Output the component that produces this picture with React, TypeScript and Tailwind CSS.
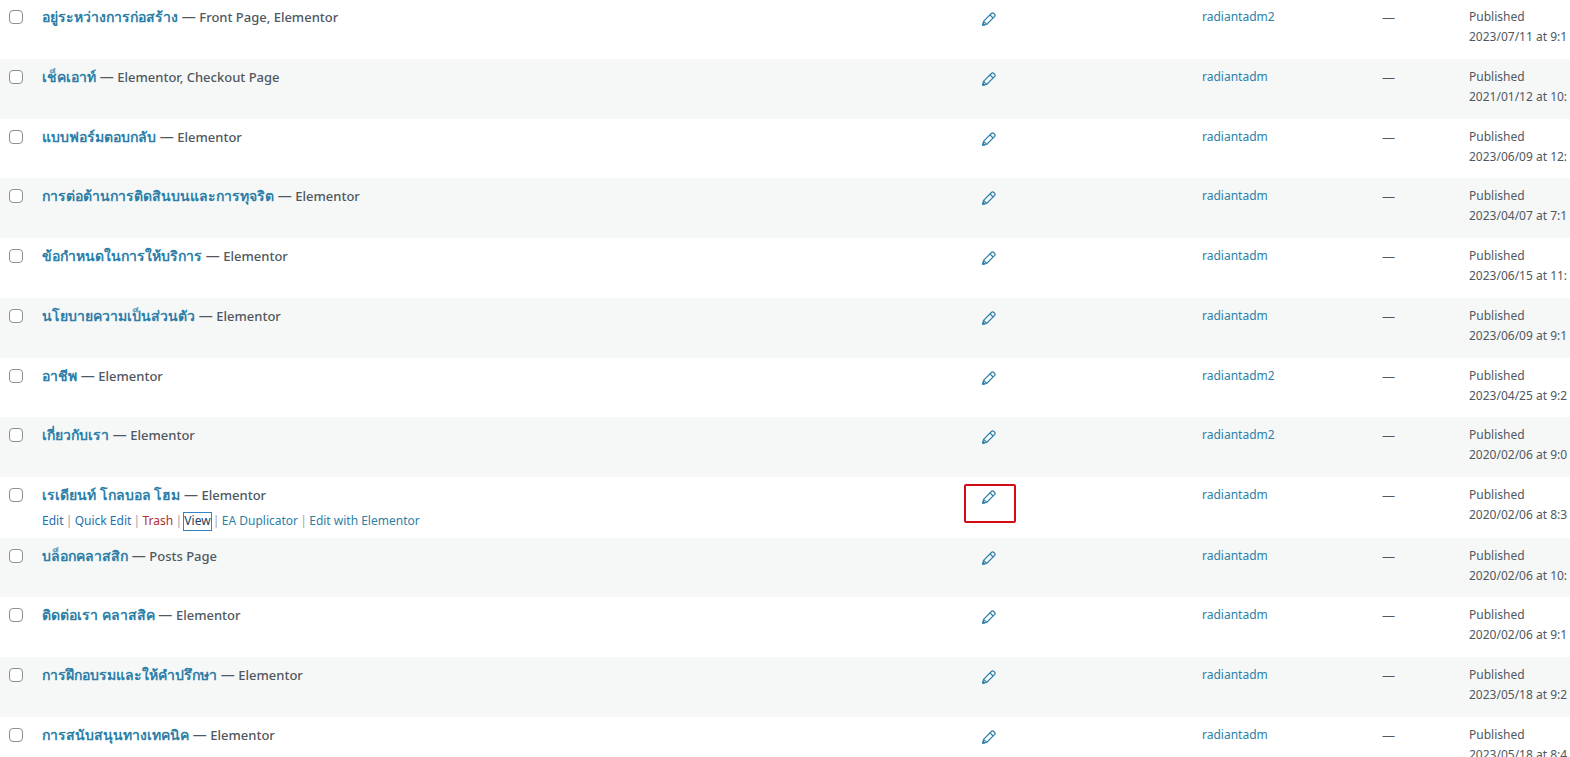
import React from 'react';

interface PageRow {
  title: string;
  state: string;
  author: string;
  date: string;
  active?: boolean;
}

const pages: PageRow[] = [
  { title: 'อยู่ระหว่างการก่อสร้าง', state: 'Front Page, Elementor', author: 'radiantadm2', date: '2023/07/11 at 9:1' },
  { title: 'เช็คเอาท์', state: 'Elementor, Checkout Page', author: 'radiantadm', date: '2021/01/12 at 10:' },
  { title: 'แบบฟอร์มตอบกลับ', state: 'Elementor', author: 'radiantadm', date: '2023/06/09 at 12:' },
  { title: 'การต่อต้านการติดสินบนและการทุจริต', state: 'Elementor', author: 'radiantadm', date: '2023/04/07 at 7:1' },
  { title: 'ข้อกำหนดในการให้บริการ', state: 'Elementor', author: 'radiantadm', date: '2023/06/15 at 11:' },
  { title: 'นโยบายความเป็นส่วนตัว', state: 'Elementor', author: 'radiantadm', date: '2023/06/09 at 9:1' },
  { title: 'อาชีพ', state: 'Elementor', author: 'radiantadm2', date: '2023/04/25 at 9:2' },
  { title: 'เกี่ยวกับเรา', state: 'Elementor', author: 'radiantadm2', date: '2020/02/06 at 9:0' },
  { title: 'เรเดียนท์ โกลบอล โฮม', state: 'Elementor', author: 'radiantadm', date: '2020/02/06 at 8:3', active: true },
  { title: 'บล็อกคลาสสิก', state: 'Posts Page', author: 'radiantadm', date: '2020/02/06 at 10:' },
  { title: 'ติดต่อเรา คลาสสิค', state: 'Elementor', author: 'radiantadm', date: '2020/02/06 at 9:1' },
  { title: 'การฝึกอบรมและให้คำปรึกษา', state: 'Elementor', author: 'radiantadm', date: '2023/05/18 at 9:2' },
  { title: 'การสนับสนุนทางเทคนิค', state: 'Elementor', author: 'radiantadm', date: '2023/05/18 at 8:4' },
];

const PencilIcon: React.FC = () => (
  <svg
    viewBox="0 0 14 14"
    className="block h-3.5 w-3.5"
    fill="none"
    stroke="currentColor"
    strokeWidth="1.2"
    strokeLinejoin="round"
    aria-hidden="true"
  >
    <path d="M.8 13.2 1.5 9.4 9.4 1.5Q10.6.3 11.8 1.5L12.5 2.2Q13.7 3.4 12.5 4.6L4.6 12.5Z" />
    <path d="M8 2.9 11.1 6M1.6 9.4 4.6 12.4" />
    <path d="M.8 13.2 1.1 11.4 2.6 12.9Z" fill="currentColor" />
  </svg>
);

const RowActions: React.FC = () => (
  <div className="flex items-baseline gap-0.5 text-[13px] text-[#a7aaad]">
    <a href="#edit" className="text-xs leading-[1.4] text-[#2271b1]">Edit</a>|
    <button type="button" className="text-xs leading-[1.4] text-[#2271b1]">Quick Edit</button>|
    <a href="#trash" className="text-xs leading-[1.4] text-[#b32d2e]">Trash</a>|
    <a href="#view" className="text-xs leading-[1.4] text-[#1d3f5e] outline outline-[#3582c4]">View</a>|
    <a href="#duplicate" className="text-xs leading-[1.4] text-[#2e7fa8]">EA Duplicator</a>|
    <a href="#elementor" className="text-xs leading-[1.4] text-[#2e7fa8]">Edit with Elementor</a>
  </div>
);

const Row: React.FC<{ page: PageRow }> = ({ page }) => (
  <tr className="align-top odd:bg-white even:bg-[#f6f8f8]">
    <td className="py-[11px] pl-[9px]">
      <input
        type="checkbox"
        aria-label={`Select ${page.title}`}
        className="block h-3.5 w-3.5 appearance-none rounded border border-[#8c8f94] bg-white"
      />
    </td>
    <td className="px-2.5 py-2 leading-[1.4]">
      <div className="mb-1.5 text-sm leading-[1.4] font-medium">
        <a href="#page" className="font-bold text-[#2e7fa8]">{page.title}</a> —{' '}
        <span className="text-[13px]">{page.state}</span>
      </div>
      {page.active ? <RowActions /> : <div className="text-[13px]">&nbsp;</div>}
    </td>
    <td className="relative px-2.5 py-[13px]">
      <a href="#translation" aria-label={`Edit translation of ${page.title}`} className="block w-3.5 text-[#2e7fa8]">
        <PencilIcon />
      </a>
      {page.active && (
        <span className="absolute top-[7px] -left-2 h-[39px] w-[52px] rounded-xs border-2 border-[#d40b12]" />
      )}
    </td>
    <td className="px-2.5 py-2 text-xs leading-5">
      <a href="#author" className="text-[#2e7fa8]">{page.author}</a>
    </td>
    <td className="px-2.5 py-2 text-[13px] leading-5">—</td>
    <td className="py-2 pl-2.5 text-xs leading-5 whitespace-nowrap">
      Published
      <br />
      {page.date}
    </td>
  </tr>
);

export default function App() {
  return (
    <main className="h-screen overflow-hidden bg-white font-['Noto_Sans','Open_Sans',sans-serif] text-[13px] text-[#50575e]">
      <table className="-mt-px w-full table-fixed">
        <colgroup>
          <col className="w-8" />
          <col />
          <col className="w-[220px]" />
          <col className="w-[180px]" />
          <col className="w-[87px]" />
          <col className="w-[111px]" />
        </colgroup>
        <tbody>
          {pages.map((page) => (
            <Row key={page.title} page={page} />
          ))}
        </tbody>
      </table>
    </main>
  );
}
